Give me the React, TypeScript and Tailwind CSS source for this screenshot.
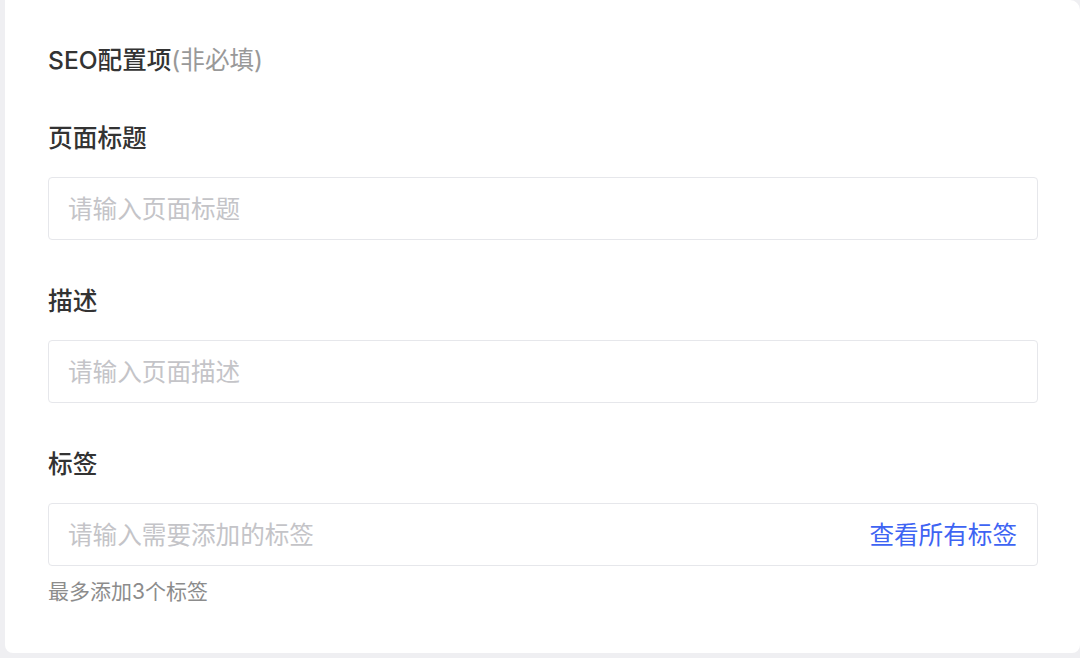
import React from "react";

const font = { fontFamily: '"Inter", "Noto Sans CJK SC", sans-serif' };

function Field({
  label,
  placeholder,
  action,
}: {
  label: string;
  placeholder: string;
  action?: string;
}) {
  return (
    <div className="flex flex-col">
      <label className="text-[24.7px] leading-[36px] font-medium text-[#333333]">
        {label}
      </label>
      <div className="mt-[21px] flex h-[63px] items-center justify-between rounded-[4px] border border-[#e6e7eb] bg-white pl-[19px] pr-[20px] pt-[2px]">
        <input
          placeholder={placeholder}
          className="flex-1 bg-transparent text-[24.6px] text-[#333] outline-none placeholder:text-[#c4c4c8]"
          style={font}
        />
        {action && (
          <button className="text-[24.6px] text-[#3e64f3]" style={font}>
            {action}
          </button>
        )}
      </div>
    </div>
  );
}

export default function App() {
  return (
    <div className="h-[658px] w-[1080px] overflow-hidden bg-[#efeff2] pl-[5px]" style={font}>
      <div className="flex h-[653px] w-[1075px] flex-col rounded-b-[8px] rounded-tr-[10px] bg-white pl-[43px] pr-[42px] pt-[42px]">
        <h2 className="text-[24.6px] leading-[36px] font-medium text-[#333333]">
          SEO配置项<span className="font-normal text-[#999999]">(非必填)</span>
        </h2>
        <div className="mt-[42px] flex flex-col gap-[43px]">
          <Field label="页面标题" placeholder="请输入页面标题" />
          <Field label="描述" placeholder="请输入页面描述" />
          <div className="flex flex-col">
            <Field
              label="标签"
              placeholder="请输入需要添加的标签"
              action="查看所有标签"
            />
            <p className="mt-[11px] text-[21px] leading-[30px] text-[#8c8c8c]">
              最多添加3个标签
            </p>
          </div>
        </div>
      </div>
    </div>
  );
}
